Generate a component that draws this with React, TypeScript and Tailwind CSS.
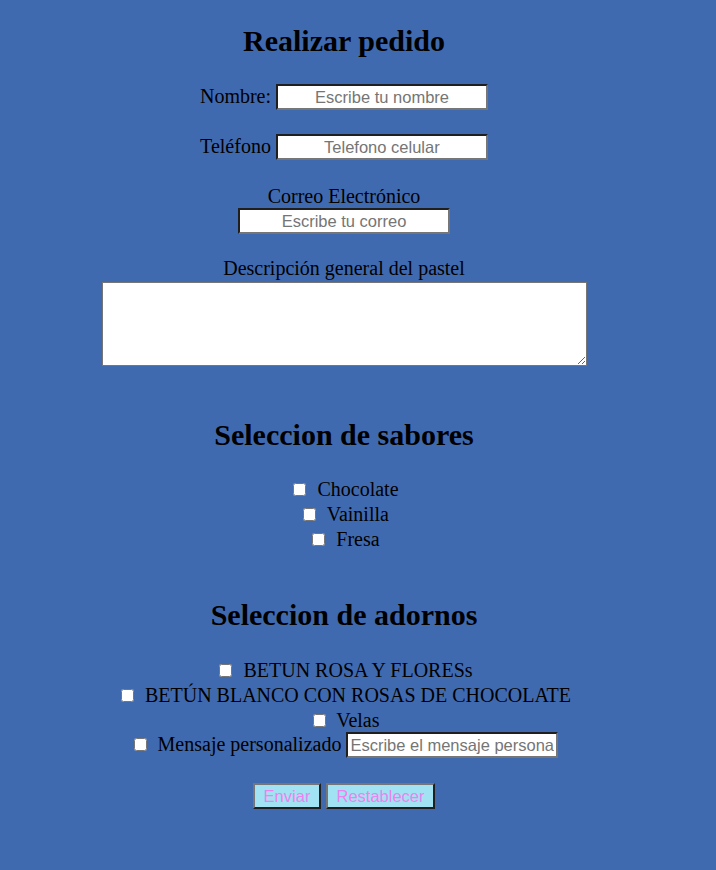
import React from 'react';

const inputCls =
  "inline-block w-[212px] h-[26px] px-[2px] align-baseline bg-white text-black text-center text-[16.5px] leading-[normal] font-['Liberation_Sans',Arial,sans-serif] border-2 border-solid border-t-[#1f1f1f] border-l-[#1f1f1f] border-b-[#767676] border-r-[#767676] placeholder:text-[#757575] outline-none";

const btnCls =
  "inline-block h-[26px] bg-[#a1e2f3] text-[#ee82ee] text-[16.5px] leading-[normal] font-['Liberation_Sans',Arial,sans-serif] border-2 border-solid border-t-[#767676] border-l-[#767676] border-b-[#1f1f1f] border-r-[#1f1f1f] align-baseline";

const boxCls = "w-[13px] h-[13px] m-[3px_6px_3px_4px] align-baseline";

const Check = ({ label }: { label: string }) => (
  <div className="leading-[25px]">
    <input type="checkbox" className={boxCls} /> {label}
  </div>
);

export default function App() {
  const sabores = ['Chocolate', 'Vainilla', 'Fresa'];
  const adornos = ['BETUN ROSA Y FLORESs', 'BETÚN BLANCO CON ROSAS DE CHOCOLATE', 'Velas'];

  return (
    <div className="min-h-[870px] bg-[#406ab0] text-black font-['Liberation_Serif','Times_New_Roman',serif] text-[20px] leading-[normal]">
      <form className="w-[688px] text-center pt-[24px]">
        <h1 className="text-[30px] font-bold">Realizar pedido</h1>

        {/* datos */}
        <div className="mt-[26px]">
          Nombre: <input className={inputCls} placeholder="Escribe tu nombre" />
        </div>
        <div className="mt-[24px]">
          Teléfono <input className={inputCls} placeholder="Telefono celular" />
        </div>
        <div className="mt-[25px]">Correo Electrónico</div>
        <div>
          <input className={inputCls} placeholder="Escribe tu correo" />
        </div>
        <div className="mt-[23px]">Descripción general del pastel</div>
        <textarea className="block mx-auto mt-[2px] w-[485px] h-[84px] bg-white border border-solid border-[#767676] resize" />

        {/* sabores */}
        <h2 className="mt-[52px] text-[30px] font-bold">Seleccion de sabores</h2>
        <div className="mt-[25px]">
          {sabores.map((s) => (
            <Check key={s} label={s} />
          ))}
        </div>

        {/* adornos */}
        <h2 className="mt-[46px] text-[30px] font-bold">Seleccion de adornos</h2>
        <div className="mt-[26px]">
          {adornos.map((s) => (
            <Check key={s} label={s} />
          ))}
          <div className="-mt-px">
            <input type="checkbox" className={boxCls} /> Mensaje personalizado{' '}
            <input className={inputCls + ' !text-left'} placeholder="Escribe el mensaje personalizado" />
          </div>
        </div>

        <div className="mt-[25px]">
          <button type="submit" className={btnCls + ' w-[68px]'}>Enviar</button>{' '}
          <button type="reset" className={btnCls + ' w-[109px]'}>Restablecer</button>
        </div>
      </form>
    </div>
  );
}
